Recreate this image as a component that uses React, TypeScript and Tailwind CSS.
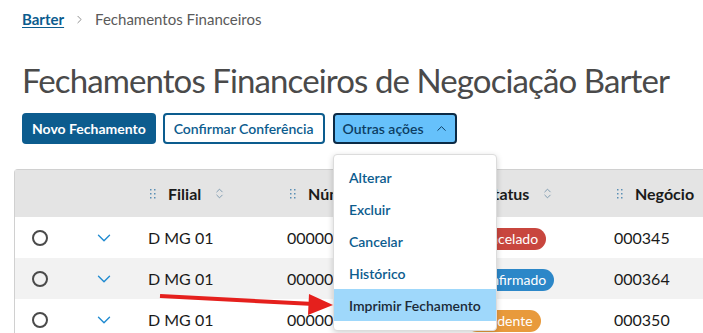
import React from 'react';
import { ChevronRight, ChevronUp, ChevronDown, ChevronsUpDown } from 'lucide-react';

const rows = [
  { filial: 'D MG 01', numero: '000001', status: 'Cancelado', tone: 'bg-[#c8463e]', negocio: '000345' },
  { filial: 'D MG 01', numero: '000002', status: 'Confirmado', tone: 'bg-[#2c87c8]', negocio: '000364' },
  { filial: 'D MG 01', numero: '000003', status: 'Pendente', tone: 'bg-[#e89a3c]', negocio: '000350' },
];

const menu = ['Alterar', 'Excluir', 'Cancelar', 'Histórico', 'Imprimir Fechamento'];

function Grip() {
  return (
    <svg width="6" height="10" viewBox="0 0 6 10" className="shrink-0">
      {[1, 5, 9].map((y) => (
        <g key={y}>
          <rect x="0" y={y - 1} width="1.5" height="1.5" fill="#5b8fb5" />
          <rect x="4" y={y - 1} width="1.5" height="1.5" fill="#5b8fb5" />
        </g>
      ))}
    </svg>
  );
}

function HeaderCell({ label, sort = true, w }: { label: string; sort?: boolean; w: string }) {
  return (
    <div className={`${w} shrink-0 flex items-center pl-[19px] gap-3`}>
      <Grip />
      <span className="text-[16px] font-bold text-[#1a1a1a]">{label}</span>
      {sort && <ChevronsUpDown className="w-[13px] h-[13px] text-[#6a8ba5]" strokeWidth={1.5} />}
    </div>
  );
}

export default function App() {
  return (
    <div className="relative w-[703px] h-[333px] overflow-hidden bg-white font-['Lato',sans-serif]">
      <div className="pl-[22px] pt-[8px]">
        <nav className="flex items-center h-[22px] text-[15px]">
          <a className="font-bold text-[#0c5c8e] underline underline-offset-2">Barter</a>
          <ChevronRight className="w-[13px] h-[13px] text-[#777] mx-[9px]" strokeWidth={1.5} />
          <span className="text-[#5a5a5a]">Fechamentos Financeiros</span>
        </nav>
        <h1 className="mt-[29px] text-[33px] leading-[42px] text-[#4a4a4a] whitespace-nowrap tracking-[-0.9px]">
          Fechamentos Financeiros de Negociação Barter
        </h1>
        <div className="mt-[12px] flex gap-[7px] text-[14px]">
          <button className="h-[31px] px-[10px] rounded-[4px] bg-[#0c5c8e] text-white font-bold">
            Novo Fechamento
          </button>
          <button className="h-[31px] px-[9px] rounded-[4px] border-2 border-[#0c5c8e] text-[#0c5c8e] font-semibold">
            Confirmar Conferência
          </button>
          <button className="ml-[1px] h-[31px] w-[124px] pl-[8px] rounded-[4px] border-2 border-[#0b2a45] bg-[#66c1fb] text-[#0c3d63] font-semibold flex items-center gap-[10px]">
            Outras ações
            <ChevronUp className="w-[15px] h-[15px]" strokeWidth={1.6} />
          </button>
        </div>
      </div>

      <div className="ml-[14px] mt-[25px] w-[800px] border-l border-t border-[#d0d0d0] rounded-tl-[4px]">
        <div className="flex h-[47px] bg-[#e4e4e4]">
          <div className="w-[116px] shrink-0" />
          <HeaderCell label="Filial" w="w-[140px]" />
          <HeaderCell label="Número" w="w-[177px]" />
          <HeaderCell label="Status" w="w-[150px]" />
          <HeaderCell label="Negócio" sort={false} w="w-[160px]" />
        </div>
        {rows.map((r, i) => (
          <div key={i} className={`flex h-[41px] items-center text-[16px] text-[#1a1a1a] ${i === 1 ? 'bg-[#f2f2f2]' : 'bg-white'}`}>
            <div className="w-[50px] shrink-0 flex justify-center">
              <span className="w-[16px] h-[16px] rounded-full border-2 border-[#4a4a4a]" />
            </div>
            <div className="w-[66px] shrink-0 flex justify-center pl-[12px]">
              <ChevronDown className="w-[22px] h-[22px] text-[#1f8ad0]" strokeWidth={1.5} />
            </div>
            <div className="w-[140px] shrink-0 pl-[17px]">{r.filial}</div>
            <div className="w-[177px] shrink-0 pl-[16px]">{r.numero}</div>
            <div className="w-[150px] shrink-0 pl-[18px]">
              <span className={`inline-block ${r.tone} text-white text-[14px] leading-[22px] px-[8px] rounded-full`}>{r.status}</span>
            </div>
            <div className="w-[160px] shrink-0 pl-[16px]">{r.negocio}</div>
          </div>
        ))}
      </div>

      <div className="absolute left-[333px] top-[154px] w-[164px] pt-[6px] pb-[9px] bg-white rounded-[4px] border border-[#dcdcdc] shadow-[0_2px_6px_rgba(0,0,0,0.18)]">
        {menu.map((m) => (
          <div
            key={m}
            className={`h-[32px] flex items-center pl-[15px] text-[14px] font-semibold ${
              m === 'Imprimir Fechamento' ? 'bg-[#9fd8fb] text-[#1b2a38]' : 'text-[#0c5c8e]'
            }`}
          >
            {m}
          </div>
        ))}
      </div>

      <svg className="absolute left-0 top-0 pointer-events-none" width="703" height="333">
        <line x1="160" y1="296" x2="314" y2="304" stroke="#e5201d" strokeWidth="4" />
        <polygon points="309,294 333,305 308,315" fill="#e5201d" />
      </svg>
    </div>
  );
}
